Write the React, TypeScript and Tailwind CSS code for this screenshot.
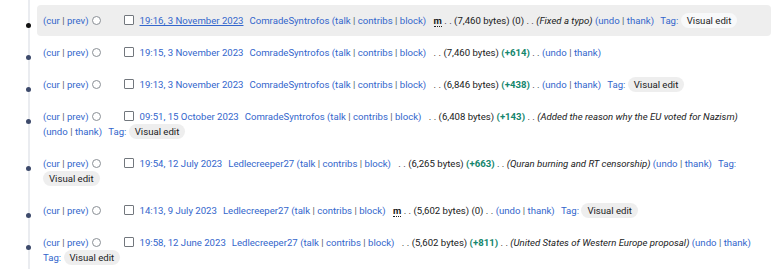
import React from "react";

type Row = {
  ts: string;
  user: string;
  minor?: boolean;
  bytes: string;
  diff: string;
  diffPos?: boolean;
  summary?: string;
  tag?: boolean;
  active?: boolean;
};

const rows: Row[] = [
  { ts: "19:16, 3 November 2023", user: "ComradeSyntrofos", minor: true, bytes: "7,460", diff: "0", summary: "Fixed a typo", tag: true, active: true },
  { ts: "19:15, 3 November 2023", user: "ComradeSyntrofos", bytes: "7,460", diff: "+614", diffPos: true },
  { ts: "19:13, 3 November 2023", user: "ComradeSyntrofos", bytes: "6,846", diff: "+438", diffPos: true, tag: true },
  { ts: "09:51, 15 October 2023", user: "ComradeSyntrofos", bytes: "6,408", diff: "+143", diffPos: true, summary: "Added the reason why the EU voted for Nazism", tag: true },
  { ts: "19:54, 12 July 2023", user: "Ledlecreeper27", bytes: "6,265", diff: "+663", diffPos: true, summary: "Quran burning and RT censorship", tag: true },
  { ts: "14:13, 9 July 2023", user: "Ledlecreeper27", minor: true, bytes: "5,602", diff: "0", tag: true },
  { ts: "19:58, 12 June 2023", user: "Ledlecreeper27", bytes: "5,602", diff: "+811", diffPos: true, summary: "United States of Western Europe proposal", tag: true },
];

const L = "text-[#3366cc]";
const Sep = () => <span className="text-[#54595d]"> | </span>;

function Item({ r }: { r: Row }) {
  return (
    <li
      className={`relative mb-[1px] pl-[6px] pr-[11px] py-[8px] leading-[15px] rounded-[4px] ${r.active ? "bg-[#eeeeee]" : ""}`}
    >
      <span
        className={`absolute left-[-11px] top-[18px] w-[5px] h-[5px] rounded-full ${r.active ? "bg-[#111111]" : "bg-[#3d4a6b]"}`}
      />
      <span className={L}>(cur</span>
      <Sep />
      <span className={L}>prev)</span>
      <span className="inline-block align-[-1px] ml-[3px] w-[9px] h-[9px] rounded-full border border-[#8a8f95] bg-white" />
      <span className="inline-block align-[-1px] ml-[23px] mr-[6px] w-[10px] h-[10px] rounded-[1px] border border-[#72777d] bg-white" />
      <a className={`${L} ${r.active ? "underline" : ""}`}>{r.ts}</a>
      <span className="inline-block w-[6px]" />
      <a className={L}>{r.user}</a>{" "}
      <span className={L}>(talk</span>
      <Sep />
      <span className={L}>contribs</span>
      <Sep />
      <span className={L}>block)</span>
      <span className="inline-block w-[5px]" />
      {r.minor && (
        <>
          {" "}
          <abbr className="font-bold no-underline border-b border-dotted border-[#202122] text-[#202122]">m</abbr>
        </>
      )}{" "}
      <span className="text-[#202122]">. . ({r.bytes} bytes)</span>{" "}
      <span className={r.diffPos ? "text-[#14866d] font-bold" : "text-[#202122]"}>({r.diff})</span>
      <span className="text-[#202122]"> . . </span>
      {r.summary && (
        <>
          <span className="italic text-[#202122]">({r.summary})</span>{" "}
        </>
      )}
      <span className={L}>(undo</span>
      <Sep />
      <span className={L}>thank)</span>
      {r.tag && (
        <>
          <span className="inline-block w-[4px]" />{" "}
          <span className={L}>Tag:</span>{" "}
          <span
            className={`whitespace-nowrap px-[6px] py-[2px] rounded-full text-[#202122] ${r.active ? "bg-[#f8f9fa]" : "bg-[#eeeeee]"}`}
          >
            Visual edit
          </span>
        </>
      )}
    </li>
  );
}

export default function App() {
  return (
    <div
      className="w-[777px] h-[269px] bg-white overflow-hidden text-[9.6px] text-[#202122]"
      style={{ fontFamily: "Roboto, 'Liberation Sans', Arial, sans-serif" }}
    >
      <div className="ml-[28px] border-l-[2px] border-[#eaecf0] pl-[7px] pt-[5px] pr-[6px] h-full">
        <ul>
          {rows.map((r, i) => (
            <Item key={i} r={r} />
          ))}
        </ul>
      </div>
    </div>
  );
}
